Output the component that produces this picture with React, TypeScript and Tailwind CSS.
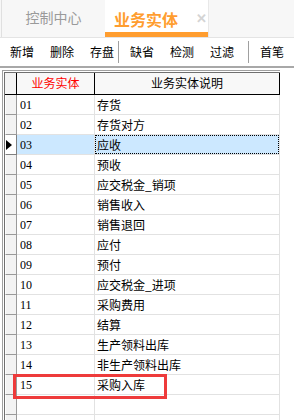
import React from "react";

const rows: [string, string][] = [
  ["01", "存货"],
  ["02", "存货对方"],
  ["03", "应收"],
  ["04", "预收"],
  ["05", "应交税金_销项"],
  ["06", "销售收入"],
  ["07", "销售退回"],
  ["08", "应付"],
  ["09", "预付"],
  ["10", "应交税金_进项"],
  ["11", "采购费用"],
  ["12", "结算"],
  ["13", "生产领料出库"],
  ["14", "非生产领料出库"],
  ["15", "采购入库"],
  ["", ""],
  ["", ""],
];

const cjk = { fontFamily: '"Noto Sans CJK SC", "Noto Sans", sans-serif' };
const num = { fontFamily: '"Liberation Serif", "Noto Sans CJK SC", serif' };

export default function App() {
  return (
    <div className="relative w-[294px] h-[420px] overflow-hidden bg-white text-black" style={cjk}>
      {/* Tab bar */}
      <div className="flex h-[38px] bg-[#f7f7f7] border-b border-[#e4e4e4]">
        <div className="w-[2px] border-r border-[#e0e0e0]" />
        <div className="w-[103px] flex items-center justify-center text-[14px] text-[#9a9a9a] pb-[3px]">
          控制中心
        </div>
        <div className="relative w-[104px] bg-white border-r border-[#e8e8e8] flex items-center pl-[10px]">
          <span className="text-[16px] font-bold text-[#ff9d2f] pt-[1px] ml-[-1px]">业务实体</span>
          <span className="ml-[18px] text-[13px] font-bold text-[#d4d4d4] leading-none pb-[3px]">✕</span>
          <div className="absolute left-0 right-0 bottom-0 h-[5px] bg-[#ff9d2f]" />
        </div>
        <div className="flex-1" />
      </div>

      {/* Toolbar */}
      <div className="flex items-center h-[30px] border-b-2 border-[#a8a8a8] text-[12px]">
        <span className="ml-[10px]">新增</span>
        <span className="ml-[16px]">删除</span>
        <span className="ml-[16px]">存盘</span>
        <span className="ml-[4px] w-px h-[22px] bg-[#a0a0a0]" />
        <span className="ml-[11px]">缺省</span>
        <span className="ml-[16px]">检测</span>
        <span className="ml-[16px]">过滤</span>
        <span className="ml-[14px] w-px h-[22px] bg-[#a0a0a0]" />
        <span className="ml-[11px]">首笔</span>
      </div>

      {/* Grid */}
      <div className="mt-[2px] ml-[2px] w-[278px] border-t border-l border-[#a0a0a0] pt-px pl-px">
        <div className="border-t border-l border-[#707070]">
          {/* Header */}
          <div className="flex h-[22px] text-[12px]">
            <div className="w-[12px] bg-[#f4f4f4] border-r border-b border-black" />
            <div className="w-[78px] bg-[#f8f8f8] border-r border-b border-black flex items-center justify-center text-[#ff0000] pb-[2px]">
              业务实体
            </div>
            <div className="w-[185px] bg-[#f8f8f8] border-r border-b border-black flex items-center justify-center pb-[2px]">
              业务实体说明
            </div>
          </div>
          {/* Rows */}
          {rows.map(([code, name], i) => {
            const sel = i === 2;
            return (
              <div key={i} className="flex h-[20px] text-[12px]">
                <div
                  className={
                    "w-[12px] flex items-center border-l border-white border-r border-b " +
                    (sel ? "bg-white border-r-[#808080] border-b-[#808080]" : "bg-[#f3f3f3] border-r-[#9a9a9a] border-b-[#9a9a9a]")
                  }
                >
                  {sel && (
                    <svg width="6" height="10" viewBox="0 0 6 10" className="ml-[0px]">
                      <path d="M0 0 L6 5 L0 10 Z" fill="#000" />
                    </svg>
                  )}
                </div>
                <div
                  className={
                    "w-[78px] flex items-center pl-[3px] border-r border-b border-[#e2e2e2] " +
                    (sel ? "bg-[#cce8ff]" : "bg-white")
                  }
                  style={num}
                >
                  <span className="text-[12px]">{code}</span>
                </div>
                <div
                  className={
                    "w-[185px] flex items-center border-r border-b border-[#e2e2e2] " +
                    (sel ? "bg-[#cce8ff]" : "bg-white")
                  }
                >
                  <div
                    className={
                      "w-full h-full flex items-center pl-[1px] " +
                      (sel ? "border border-dotted border-black" : "border border-transparent")
                    }
                  >
                    {name}
                  </div>
                </div>
              </div>
            );
          })}
        </div>
      </div>

      {/* Red annotation box */}
      <div className="absolute left-[13px] top-[374px] w-[154px] h-[25px] border-[3px] border-[#ee3b3b]" />
    </div>
  );
}
